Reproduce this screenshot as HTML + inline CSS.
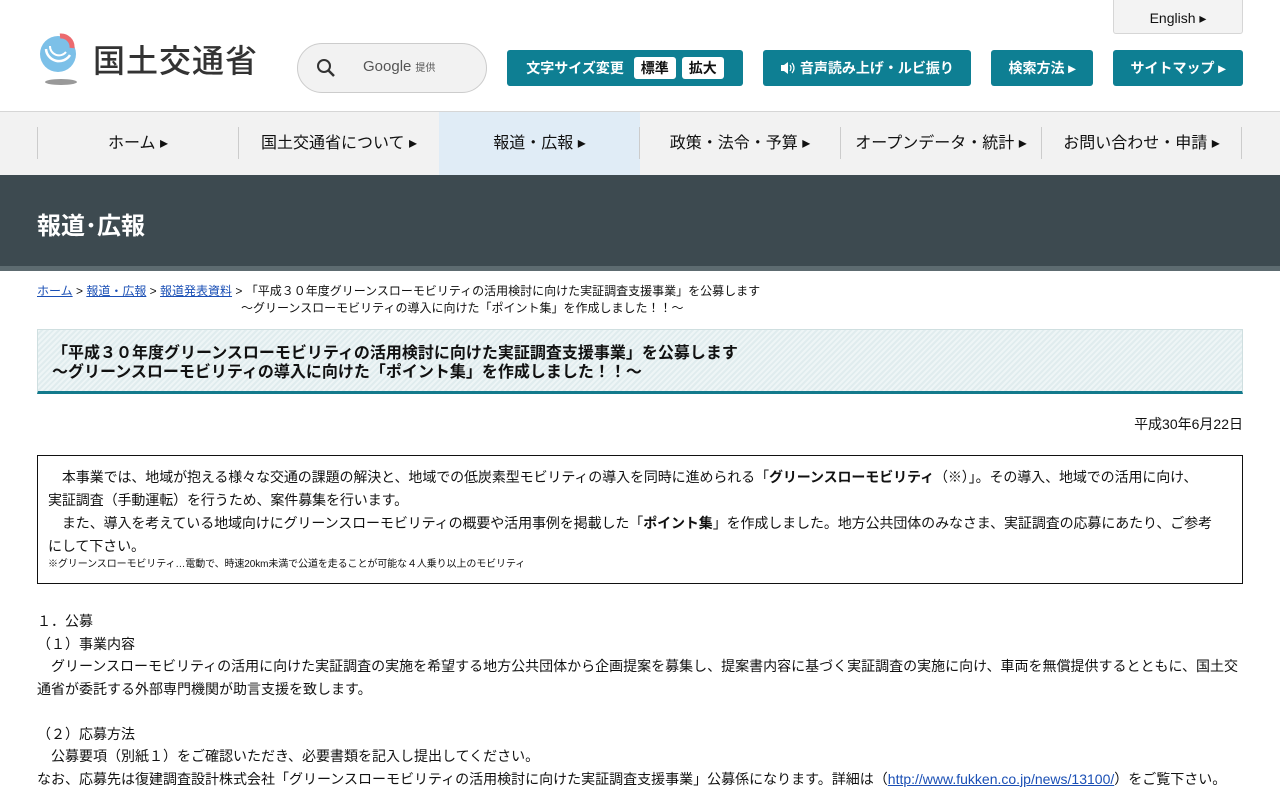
<!DOCTYPE html>
<html lang="ja"><head><meta charset="utf-8">
<style>
*{margin:0;padding:0;box-sizing:border-box}
body{width:1280px;height:800px;overflow:hidden;background:#fff;font-family:"Liberation Sans","Noto Sans CJK JP",sans-serif;color:#111}
.hdr{position:relative;height:112px;border-bottom:1px solid #d6d6d6}
.logo{position:absolute;left:36px;top:33px}
.logotxt{position:absolute;left:93px;top:36px;font-size:32px;font-weight:500;color:#333;letter-spacing:1px}
.search{position:absolute;left:297px;top:43px;width:190px;height:50px;border:1px solid #ccc;border-radius:25px;background:#f2f2f2}
.search .g{position:absolute;left:65px;top:14px;font-size:15px;color:#555}
.search .g small{font-size:10px;margin-left:4px}
.btn{position:absolute;top:50px;height:36px;background:#0e7f93;border-radius:3px;color:#fff;font-size:14px;font-weight:bold;line-height:36px;text-align:center}
.btn .w{display:inline-block;background:#fff;color:#111;border-radius:3px;padding:0 7px;line-height:22px;margin-left:6px}
.eng{position:absolute;left:1113px;top:0;width:130px;height:34px;background:#f3f3f3;border:1px solid #d6d6d6;border-top:none;border-radius:0 0 3px 3px;font-size:14px;text-align:center;line-height:36px}
.nav{position:absolute;top:112px;left:0;width:1280px;height:63px;background:#f2f2f2}
.nav div{position:absolute;top:15px;height:32px;border-left:1px solid #ccc;font-size:16px;line-height:34px;text-align:center;width:201px}
.band{position:absolute;top:175px;left:0;width:1280px;height:91px;background:#3d4a50}
.band h1{position:absolute;left:37px;top:31px;color:#fff;font-size:24px;font-weight:bold}
.strip{position:absolute;top:266px;left:0;width:1280px;height:5px;background:#5d6b70}
.bc{position:absolute;left:37px;top:283px;font-size:12px;line-height:17px}
.bc a{color:#1a4fb5;text-decoration:underline}
.ttl{position:absolute;left:37px;top:329px;width:1206px;height:65px;border:1px solid #cfdfe0;border-bottom:3px solid #137a8c;background:repeating-linear-gradient(135deg,#eef5f6 0 2px,#e0ecee 2px 4px);padding:14px 0 0 14px;font-size:16px;font-weight:bold;line-height:19px}
.date{position:absolute;right:37px;top:414px;font-size:14px}
.box{position:absolute;left:37px;top:455px;width:1206px;height:129px;border:1px solid #111;padding:10px 14px 10px 10px;font-size:14px;line-height:23px;letter-spacing:-0.1px}
.body{position:absolute;left:37px;top:610px;width:1210px;font-size:14px;line-height:22.5px}
.body a{color:#1a4fb5;text-decoration:underline}
</style></head><body>
<div class="hdr">
<svg class="logo" width="50" height="54" viewBox="0 0 50 54"><circle cx="22" cy="21" r="18" fill="#7cc0e8"/><path d="M10 16a13 13 0 0 0 24 6" fill="none" stroke="#fff" stroke-width="2.5"/><path d="M14 13a9 9 0 0 0 16 6" fill="none" stroke="#fff" stroke-width="2"/><path d="M24 3a11 11 0 0 1 12 12" fill="none" stroke="#ec6a6e" stroke-width="5"/><ellipse cx="25" cy="49" rx="16" ry="3" fill="#999"/></svg>
<div class="logotxt">国土交通省</div>
<div class="search"><svg style="position:absolute;left:18px;top:14px" width="20" height="20" viewBox="0 0 20 20"><circle cx="8" cy="8" r="6" fill="none" stroke="#333" stroke-width="2"/><path d="M12.5 12.5L18 18" stroke="#333" stroke-width="2.5"/></svg><span class="g">Google<small>提供</small></span></div>
<div class="eng">English ▸</div>
<div class="btn" style="left:507px;width:236px">文字サイズ変更 <span class="w">標準</span><span class="w">拡大</span></div>
<div class="btn" style="left:763px;width:208px"><svg width="16" height="14" viewBox="0 0 16 14" style="vertical-align:-2px"><path d="M1 4h3l4-3v12l-4-3H1z" fill="#fff"/><path d="M10 4q2 3 0 6M12 2q4 5 0 10" fill="none" stroke="#fff" stroke-width="1.2"/></svg> 音声読み上げ・ルビ振り</div>
<div class="btn" style="left:991px;width:102px">検索方法 ▸</div>
<div class="btn" style="left:1113px;width:130px">サイトマップ ▸</div>
</div>
<div class="nav">
<div style="left:37px">ホーム ▸</div>
<div style="left:238px">国土交通省について ▸</div>
<div style="left:439px;top:0;height:63px;line-height:63px;background:#e0ecf6;border-left:none">報道・広報 ▸</div>
<div style="left:639px">政策・法令・予算 ▸</div>
<div style="left:840px">オープンデータ・統計 ▸</div>
<div style="left:1041px;border-right:1px solid #ccc">お問い合わせ・申請 ▸</div>
</div>
<div class="band"><h1>報道･広報</h1></div>
<div class="strip"></div>
<div class="bc"><a>ホーム</a> &gt; <a>報道・広報</a> &gt; <a>報道発表資料</a> &gt; 「平成３０年度グリーンスローモビリティの活用検討に向けた実証調査支援事業」を公募します<br><span style="padding-left:204px">～グリーンスローモビリティの導入に向けた「ポイント集」を作成しました！！～</span></div>
<div class="ttl">「平成３０年度グリーンスローモビリティの活用検討に向けた実証調査支援事業」を公募します<br>～グリーンスローモビリティの導入に向けた「ポイント集」を作成しました！！～</div>
<div class="date">平成30年6月22日</div>
<div class="box">　本事業では、地域が抱える様々な交通の課題の解決と、地域での低炭素型モビリティの導入を同時に進められる「<b>グリーンスローモビリティ</b>（※）」。その導入、地域での活用に向け、<br>実証調査（手動運転）を行うため、案件募集を行います。<br>　また、導入を考えている地域向けにグリーンスローモビリティの概要や活用事例を掲載した「<b>ポイント集</b>」を作成しました。地方公共団体のみなさま、実証調査の応募にあたり、ご参考<br>にして下さい。<br><span style="font-size:10px;line-height:14px;display:block">※グリーンスローモビリティ…電動で、時速20km未満で公道を走ることが可能な４人乗り以上のモビリティ</span></div>
<div class="body">１．公募<br>（１）事業内容<br>　グリーンスローモビリティの活用に向けた実証調査の実施を希望する地方公共団体から企画提案を募集し、提案書内容に基づく実証調査の実施に向け、車両を無償提供するとともに、国土交通省が委託する外部専門機関が助言支援を致します。<br><br>（２）応募方法<br>　公募要項（別紙１）をご確認いただき、必要書類を記入し提出してください。<br>なお、応募先は復建調査設計株式会社「グリーンスローモビリティの活用検討に向けた実証調査支援事業」公募係になります。詳細は（<a>http://www.fukken.co.jp/news/13100/</a>）をご覧下さい。</div>
</body></html>
